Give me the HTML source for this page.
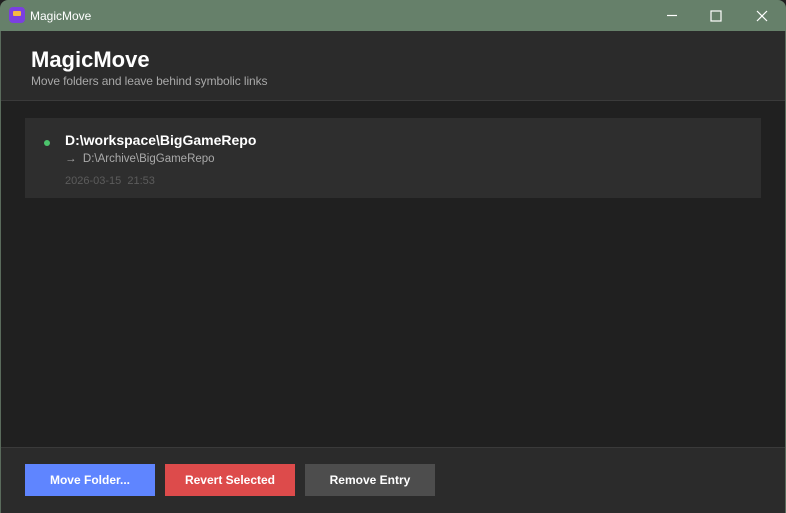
<!DOCTYPE html>
<html><head><style>
*{margin:0;padding:0;box-sizing:border-box}
body{width:786px;height:513px;background:#202020;font-family:"Liberation Sans",sans-serif;overflow:hidden;position:relative}
.tb{position:absolute;left:0;top:0;width:786px;height:31px;background:#66806a;border-radius:8px 8px 0 0}
.tb .t{position:absolute;left:30px;top:9px;color:#fff;font-size:12px}
.icon{position:absolute;left:9px;top:7px;width:16px;height:16px;border-radius:4px;background:#7b3fe0}
.icon i{position:absolute;left:4px;top:4px;width:8px;height:5px;background:#f5b942;border-radius:1px}
.hdr{position:absolute;left:1px;top:31px;width:784px;height:70px;background:#2b2b2b;border-bottom:1px solid #3a3a3a}
.hdr h1{position:absolute;left:30px;top:16px;color:#fff;font-size:22px;font-weight:bold}
.hdr p{position:absolute;left:30px;top:43px;color:#a8a8a8;font-size:12px;letter-spacing:-0.1px}
.card{position:absolute;left:25px;top:118px;width:736px;height:80px;background:#2e2e2e}
.dot{position:absolute;left:19px;top:22px;width:6px;height:6px;border-radius:50%;background:#4cc46c}
.p1{position:absolute;left:40px;top:14px;color:#fff;font-size:14px;font-weight:bold}
.p2{position:absolute;left:40px;top:35px;color:#aaa;font-size:11.5px}
.p3{position:absolute;left:40px;top:57px;color:#5c5c5c;font-size:11px}
.ftr{position:absolute;left:1px;top:447px;width:784px;height:66px;background:#2b2b2b;border-top:1px solid #3a3a3a}
.b{position:absolute;top:464px;height:32px;width:130px;color:#fff;font-size:12px;font-weight:bold;text-align:center;line-height:32px}
.side{position:absolute;top:31px;width:1px;height:482px;background:#5a6b5c}
</style></head><body>
<div class="tb"><div class="icon"><i></i></div><span class="t">MagicMove</span>
<svg style="position:absolute;left:660px;top:8px" width="120" height="16" stroke="#fff" stroke-width="1.2" fill="none">
<line x1="7" y1="7.5" x2="17" y2="7.5"/><rect x="51" y="3" width="10" height="10"/><line x1="97" y1="3" x2="107" y2="13"/><line x1="107" y1="3" x2="97" y2="13"/></svg></div>
<div class="hdr"><h1>MagicMove</h1><p>Move folders and leave behind symbolic links</p></div>
<div class="card"><div class="dot"></div><div class="p1">D:\workspace\BigGameRepo</div><div class="p2">→&nbsp; D:\Archive\BigGameRepo</div><div class="p3">2026-03-15&nbsp; 21:53</div></div>
<div class="ftr"></div>
<div class="b" style="left:25px;background:#5f85ff">Move Folder...</div>
<div class="b" style="left:165px;background:#dd4b4b">Revert Selected</div>
<div class="b" style="left:305px;background:#4d4d4d">Remove Entry</div>
<div class="side" style="left:0"></div><div class="side" style="left:785px"></div>
</body></html>
